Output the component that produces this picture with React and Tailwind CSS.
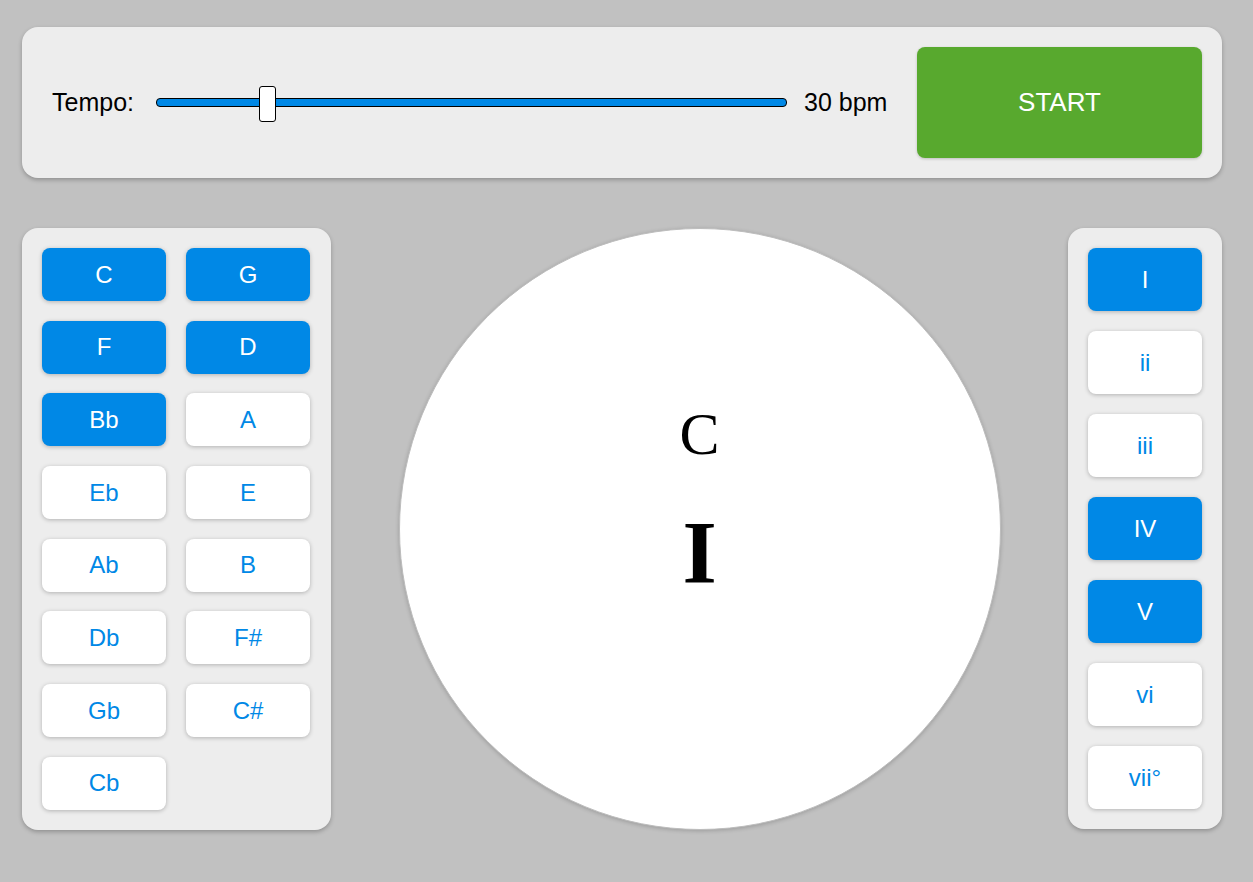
import { useState } from "react";

const KEYS = ["C", "G", "F", "D", "Bb", "A", "Eb", "E", "Ab", "B", "Db", "F#", "Gb", "C#", "Cb"];
const DEGREES = ["I", "ii", "iii", "IV", "V", "vi", "vii°"];

export default function App() {
  const [keys, setKeys] = useState(["C", "G", "F", "D", "Bb"]);
  const [degrees, setDegrees] = useState(["I", "IV", "V"]);

  function toggle(list, setList, v) {
    setList(list.includes(v) ? list.filter((x) => x !== v) : [...list, v]);
  }

  const on = "bg-[#0088e6] text-white";
  const off = "bg-white text-[#0088e6]";

  return (
    <div className="min-h-[882px] bg-[#c1c1c1] pl-[22px] pt-[27px] font-['Liberation_Sans',Arial,sans-serif]">
      <div className="w-[1200px]">
        {/* top bar */}
        <div className="flex h-[151px] items-center rounded-2xl bg-[#ededed] p-5 shadow-[0_2px_4px_rgba(0,0,0,0.25)]">
          <span className="ml-[10px] text-[25px] text-black">Tempo:</span>
          <div className="relative ml-[22px] h-[9px] w-[631px] rounded-sm border border-black bg-[#0088e6]">
            <div className="absolute left-[102px] top-[-13px] h-[36px] w-[17px] rounded-[3px] border border-black bg-white" />
          </div>
          <span className="ml-[17px] text-[25px] text-black">30 bpm</span>
          <button className="ml-auto h-[111px] w-[285px] rounded-lg bg-[#58a92e] text-[26px] text-white shadow-[0_1px_3px_rgba(0,0,0,0.2)]">
            START
          </button>
        </div>

        <div className="mt-[50px] flex items-start justify-between">
          {/* keys */}
          <div className="grid w-[309px] grid-cols-[124px_124px] gap-x-5 gap-y-[19.7px] rounded-2xl bg-[#ededed] p-5 shadow-[0_2px_4px_rgba(0,0,0,0.25)]">
            {KEYS.map((k) => (
              <button
                key={k}
                onClick={() => toggle(keys, setKeys, k)}
                className={`h-[53px] rounded-lg text-[24px] shadow-[0_1px_4px_rgba(0,0,0,0.25)] ${keys.includes(k) ? on : off}`}
              >
                {k}
              </button>
            ))}
          </div>

          {/* circle */}
          <div className="flex h-[602px] w-[602px] flex-col items-center rounded-full border border-[#bdbdbd] bg-white pt-[175px] font-['Liberation_Serif','Times_New_Roman',serif] text-black shadow-[0_1px_4px_rgba(0,0,0,0.2)]">
            <div className="text-[60px] leading-none">C</div>
            <div className="mt-[45px] text-[88px] font-bold leading-none">I</div>
          </div>

          {/* degrees */}
          <div className="flex w-[154px] flex-col gap-5 rounded-2xl bg-[#ededed] p-5 shadow-[0_2px_4px_rgba(0,0,0,0.25)]">
            {DEGREES.map((d) => (
              <button
                key={d}
                onClick={() => toggle(degrees, setDegrees, d)}
                className={`h-[63px] rounded-lg text-[24px] shadow-[0_1px_4px_rgba(0,0,0,0.25)] ${degrees.includes(d) ? on : off}`}
              >
                {d}
              </button>
            ))}
          </div>
        </div>
      </div>
    </div>
  );
}
